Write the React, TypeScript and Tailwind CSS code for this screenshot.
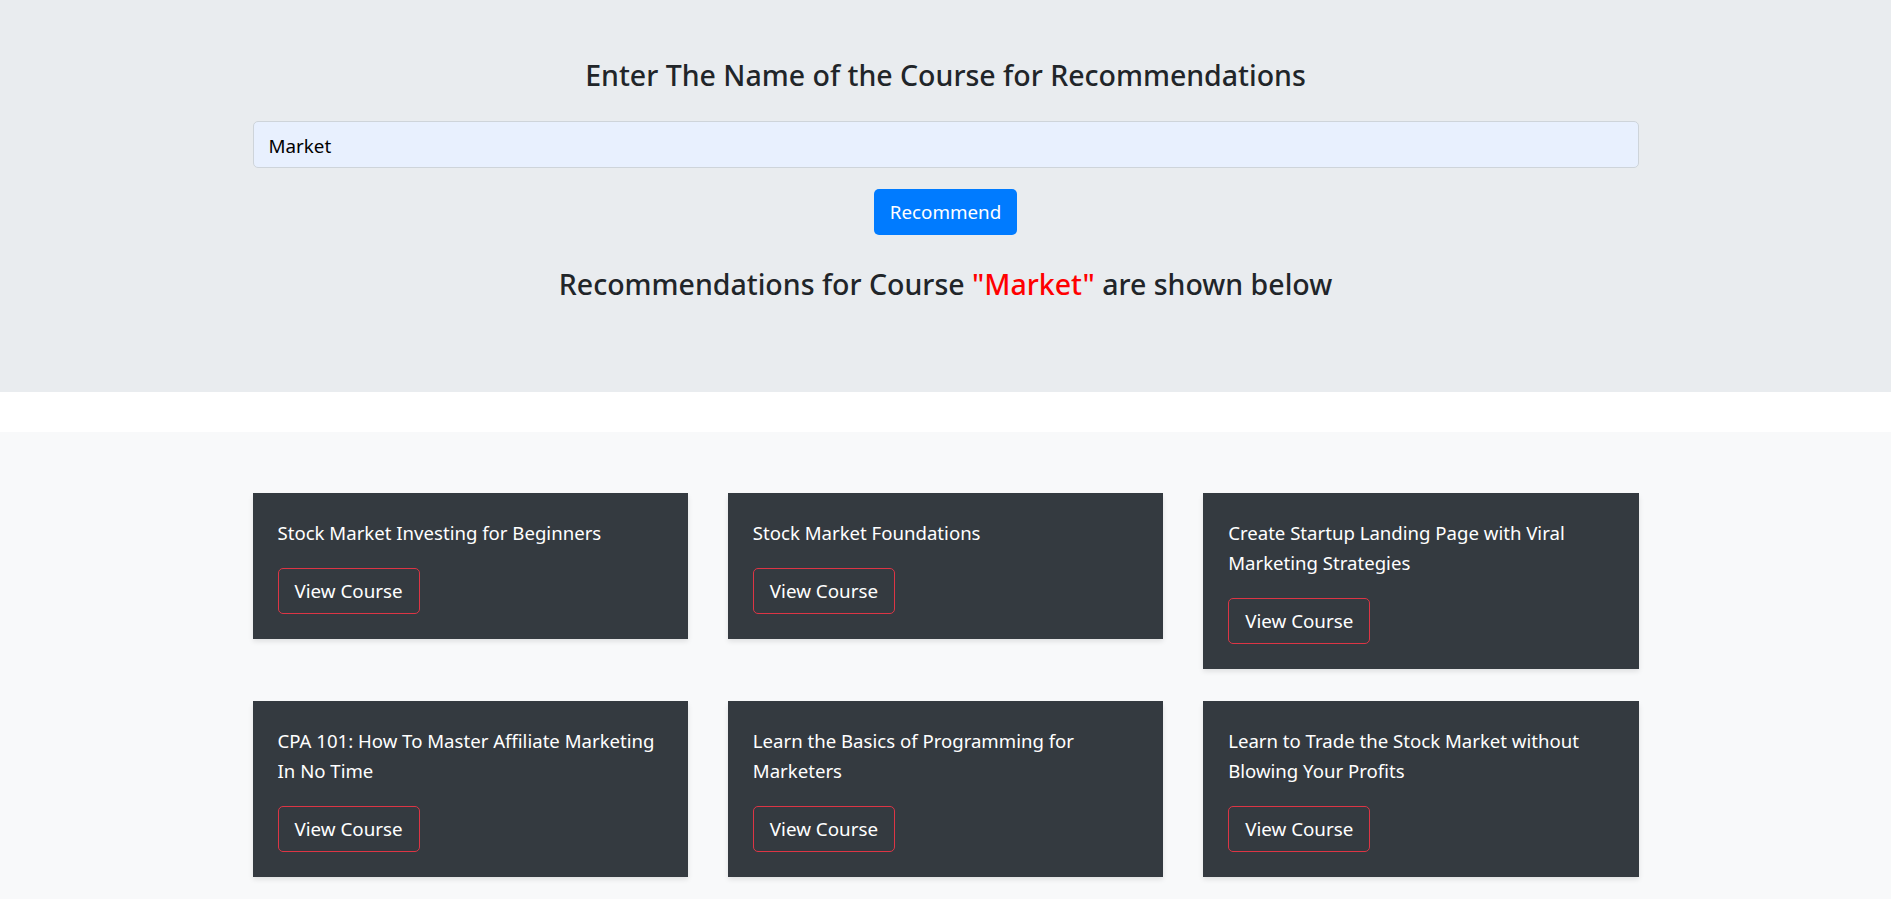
import React from "react";

const courses: string[][] = [
  ["Stock Market Investing for Beginners"],
  ["Stock Market Foundations"],
  ["Create Startup Landing Page with Viral", "Marketing Strategies"],
  ["CPA 101: How To Master Affiliate Marketing", "In No Time"],
  ["Learn the Basics of Programming for", "Marketers"],
  ["Learn to Trade the Stock Market without", "Blowing Your Profits"],
];

export default function App() {
  return (
    <div
      className="min-h-screen bg-[#f8f9fa] text-[#212529]"
      style={{ fontFamily: '"Segoe UI", "Noto Sans", "Open Sans", sans-serif' }}
    >
      <section className="bg-[#e9ecef] h-[392px] pt-[57px]">
        <div className="w-[1386px] mx-auto flex flex-col items-center">
          <h4 className="text-[28.5px] leading-[36px] font-medium text-center">
            Enter The Name of the Course for Recommendations
          </h4>
          <input
            type="text"
            defaultValue="Market"
            className="mt-[28px] w-full h-[47px] bg-[#e8f0fe] border border-[#ced4da] rounded-[5px] px-[15px] pt-[2px] text-[18.8px] text-black outline-none"
          />
          <button className="mt-[21px] h-[46px] px-[16px] rounded-[5px] bg-[#007bff] text-white text-[18.8px] leading-[30px]">
            Recommend
          </button>
          <h4 className="mt-[31px] text-[28.5px] leading-[36px] font-medium text-center">
            Recommendations for Course{" "}
            <span className="text-[#ff0000]">"Market"</span> are shown below
          </h4>
        </div>
      </section>
      <div className="bg-white h-[40px]" />
      <section className="bg-[#f8f9fa] pt-[61px] pb-[40px]">
        <div className="w-[1386px] mx-auto grid grid-cols-3 gap-x-[40px] gap-y-[32px] items-start">
          {courses.map((lines, i) => (
            <div
              key={i}
              className="bg-[#343a40] p-[25px] shadow-[0_2.5px_5px_rgba(0,0,0,0.1)]"
            >
              <h5 className="text-white text-[18.6px] leading-[30px] mb-[20px]">
                {lines.map((l, j) => (
                  <span key={j} className="block whitespace-nowrap">
                    {l}
                  </span>
                ))}
              </h5>
              <button className="h-[46px] px-[16px] rounded-[5px] border border-[#dc3545] text-white text-[18.8px] leading-[30px]">
                View Course
              </button>
            </div>
          ))}
        </div>
      </section>
    </div>
  );
}
